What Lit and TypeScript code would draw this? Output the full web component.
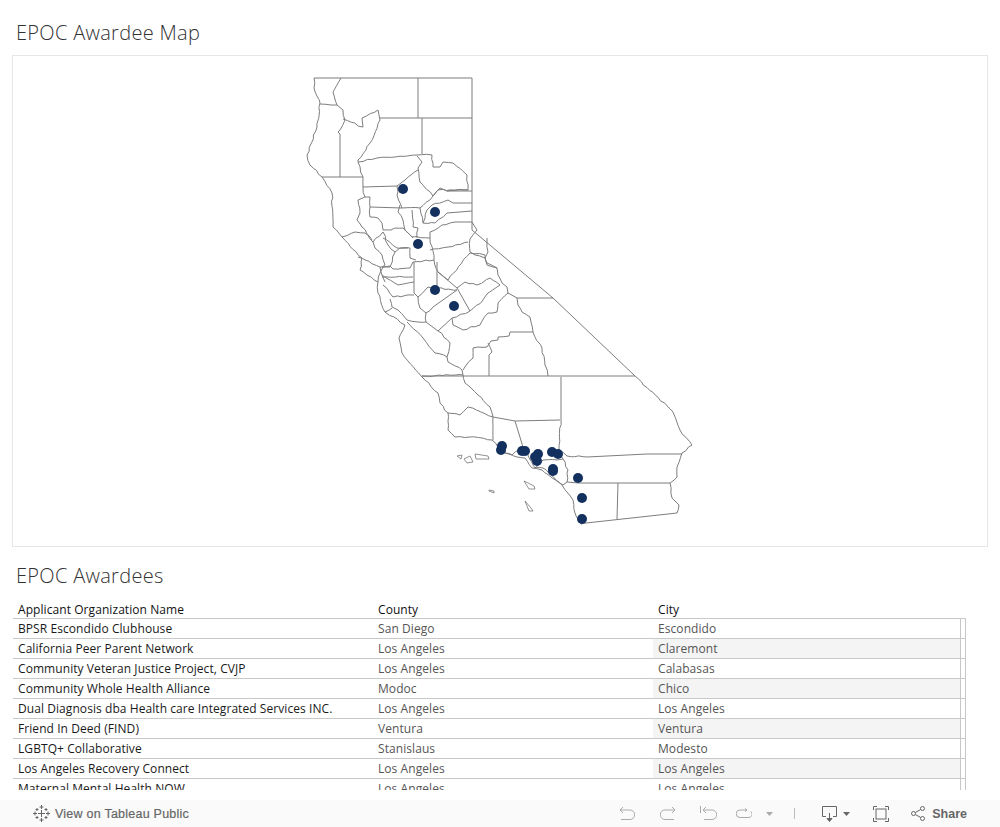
import { LitElement, html, css, svg } from "lit";
import { customElement } from "lit/decorators.js";

type P = [number, number];
const parse = (s: string): P[] => s.split(" ").map((p) => p.split(",").map(Number) as P);

// Deterministic small wobble so that natural county borders look hand-surveyed, not ruler-straight.
function wobble(s: string, seed: number): string {
  const pts = parse(s);
  let r = seed * 9301 + 49297;
  const rnd = () => {
    r = (r * 9301 + 49297) % 233280;
    return r / 233280 - 0.5;
  };
  const out: string[] = [];
  pts.forEach((p, i) => {
    out.push(`${p[0]},${p[1]}`);
    const q = pts[i + 1];
    if (!q) return;
    const len = Math.hypot(q[0] - p[0], q[1] - p[1]);
    const n = Math.floor(len / 4);
    for (let k = 1; k < n; k++) {
      const t = k / n;
      out.push(`${(p[0] + (q[0] - p[0]) * t + rnd() * 1.6).toFixed(1)},${(p[1] + (q[1] - p[1]) * t + rnd() * 1.6).toFixed(1)}`);
    }
  });
  return out.join(" ");
}

const straight = [
  "314,78 472,78 472,230 553,298 635,376",
  "418,78 418,118", "380,118 472,118", "422,118 422,154", "472,191 447,191", "472,203 453,203", "472,211 447,213", "472,222 455,222",
  "322,177 363,177", "340,134 340,177", "363,187 397,186",
  "397,186 405,180", "402,208 370,207",
  "422,376 635,376", "561,377 561,420", "493,417 515,421 560,420", "618,483 617,519",
  "517,298 553,298", "489,355 489,376", "414,262 414,293", "437,262 437,288",
  "533,332 510,332", "677,513 586,523", "567,482 578,483 670,483", "587,457 647,454 682,454",
  "438,272 448,280", "438,272 457,288 470,311", "457,290 433,307", "426,322 438,331 452,318", "515,421 523,447",
];

const natural = [
  "635,376 673,412 680,430 692,445 682,453 677,467 677,477 670,483 672,498 679,505 677,513",
  "586,523 581,524 575,513 573,500 562,485 542,470 532,468 525,458 517,457 505,453 492,440 470,437 455,437 448,430 448,413 440,403 438,393 422,377 402,353 399,338 405,325 385,312 378,293 378,282 360,270 362,258 342,237 333,227 332,193 322,177 310,165 307,155 317,127 320,103 314,88 314,78",
  "341,78 333,92 337,105 331,105 320,104",
  "337,105 343,110 345,120 340,130 338,132 340,134",
  "343,119 363,127 362,118 378,110 380,120 370,143 358,160 358,162 377,158 395,157 417,155 432,155 433,167 440,167 443,162 453,163 467,175 468,190 447,191 440,188 433,196 420,182 418,168 422,162 417,156",
  "358,162 363,177 363,187 365,197 358,200 360,213 357,220 362,227 372,240",
  "405,180 418,170", "397,186 398,192 397,195 402,208", "370,207 370,197 365,197",
  "370,207 370,217 378,218 382,223 383,230 403,228 412,237 430,238",
  "402,208 420,208 433,196", "400,205 398,212 403,220 405,230 413,238",
  "412,210 413,227 418,228 417,238", "420,208 423,223 435,223 447,213",
  "427,210 423,223", "427,210 432,205 448,200 453,203", "433,196 438,190 468,190",
  "430,238 430,232 442,225 455,222", "472,222 477,230",
  "477,230 470,239 470,252 475,255 485,258", "430,250 448,247 468,242",
  "487,238 487,243 488,252 485,258 487,265 497,268 498,275 502,283 507,287 508,293 517,298",
  "517,298 518,305 522,312 530,317 533,332 542,348 545,365 548,376",
  "510,332 509,336 498,337 498,340 491,341 487,347 473,348 473,358 463,370",
  "488,343 492,352 489,355",
  "508,293 498,303 497,312 488,313 480,325 463,330 453,325 452,318 470,311 483,300 488,293 500,285 490,278 477,285 465,282 457,288",
  "448,280 470,253 485,255 487,263 497,268",
  "430,238 434,260 438,272",
  "342,237 355,232 365,233 373,242 383,232 388,245 395,252 390,267 380,267 358,257",
  "373,242 375,248 382,255 385,265 382,267", "395,252 400,248 410,248 410,258 416,260",
  "383,238 397,248 408,248", "434,260 413,262 410,268 393,269 390,266 383,267 380,273 378,282",
  "414,293 418,297 420,308 426,313 426,322",
  "418,297 428,287 437,288", "437,288 457,290", "433,307 426,313",
  "382,275 398,285 414,282", "380,267 382,275 385,282", "382,277 413,277",
  "383,285 393,297 414,295", "390,299 392,307 398,310 407,320 418,322 426,322",
  "385,312 392,308", "407,322 423,338 435,353 447,357 450,343 438,331",
  "447,357 448,362 462,370 463,375 422,376", "463,375 465,383 470,387",
  "470,387 478,395 490,407 493,417 493,440",
  "561,420 559,450 567,456 587,457",
  "523,447 512,455 505,453",
  "448,413 460,415 468,407 493,417", "523,447 535,468 543,460 557,460 563,459 568,470 567,482 563,485 543,468 535,468",
  "559,450 563,459",
];

const islands = [
  "457,456 462,455 461,459 457,456", "464,459 470,456 473,462 467,463 464,459",
  "475,454 488,456 489,459 476,459 475,454", "489,490 494,491 494,493 489,491 489,490",
  "524,481 534,486 535,489 529,489 524,481", "525,501 531,508 533,511 529,511 525,501",
];

const dots: P[] = [
  [403, 189], [435, 212], [418, 244], [435, 290], [454, 306],
  [502, 446], [501, 450], [522, 451], [525, 451], [538, 454], [535, 457], [537, 461],
  [552, 452], [558, 454], [553, 469], [553, 471], [578, 478], [582, 498], [582, 519],
];

const rows = [
  ["BPSR Escondido Clubhouse", "San Diego", "Escondido"],
  ["California Peer Parent Network", "Los Angeles", "Claremont"],
  ["Community Veteran Justice Project, CVJP", "Los Angeles", "Calabasas"],
  ["Community Whole Health Alliance", "Modoc", "Chico"],
  ["Dual Diagnosis dba Health care Integrated Services INC.", "Los Angeles", "Los Angeles"],
  ["Friend In Deed (FIND)", "Ventura", "Ventura"],
  ["LGBTQ+ Collaborative", "Stanislaus", "Modesto"],
  ["Los Angeles Recovery Connect", "Los Angeles", "Los Angeles"],
  ["Maternal Mental Health NOW", "Los Angeles", "Los Angeles"],
];

@customElement("app-root")
export class AppRoot extends LitElement {
  static styles = css`
    :host { display: flex; flex-direction: column; height: 827px; overflow: hidden; background: #fff; font-family: "Open Sans", sans-serif; }
    .title { font-size: 20px; font-weight: 300; color: #333; line-height: 28px; padding: 19px 0 0 16px; height: 36px; letter-spacing: 0.3px; }
    .map { margin: 0 12px; border: 1px solid #e6e6e6; height: 490px; }
    .map svg { display: block; }
    .l { fill: none; stroke: #7d7d7d; stroke-width: 1; stroke-linejoin: round; }
    .i { fill: #fff; stroke: #777; stroke-width: .8; }
    .d { fill: #13305f; }
    .t2 { padding-top: 15px; height: 40px; }
    .table { margin-left: 13px; width: 953px; height: 188px; overflow: hidden; font-size: 12px; color: #555; letter-spacing: .07px; }
    .r { display: grid; grid-template-columns: 360px 280px 1fr; grid-template-rows: 19px; height: 19px; line-height: 20px; border-bottom: 1px solid #c8c8c8; }
    .r > div { padding-left: 5px; white-space: nowrap; }
    .head { height: 16px; grid-template-rows: 16px; line-height: 15px; color: #111; font-weight: 500; }
    .n { color: #1a1a1a; font-weight: 500; }
    .r > .c { display: flex; height: 19px; padding-left: 0; border-right: 1px solid #c8c8c8; }
    .c span { flex: 1; padding-left: 5px; margin-right: 4px; border-right: 1px solid #c8c8c8; }
    .band .c span { background: #f4f4f4; }
    .gap { height: 10px; }
    .bar { height: 27px; background: #fafafa; display: flex; align-items: center; padding: 0 33px; color: #666; font-family: "Liberation Sans", sans-serif; font-size: 12.5px; }
    .bar svg { display: block; flex: none; }
    .view { margin-left: 5px; letter-spacing: .24px; -webkit-text-stroke: .2px #666; }
    .sp { flex: 1; }
    .s { fill: none; stroke: #aaa; stroke-width: 1; }
    .s2 { fill: none; stroke: #666; stroke-width: 1; }
    .f { fill: #666; }
    .share { margin-left: 7px; font-weight: 700; }
    .m25 { margin-left: 25px; } .m24 { margin-left: 24px; } .m23 { margin-left: 23px; } .m22 { margin-left: 22px; }
    .m19 { margin-left: 19px; } .m14 { margin-left: 14px; } .m21 { margin-left: 21px; }
    .m27 { margin-left: 27px; } .m6 { margin-left: 6px; }
    .div { width: 1px; height: 11px; background: #bbb; }
  `;

  render() {
    return html`
      <div class="title">EPOC Awardee Map</div>
      <div class="map">
        <svg width="974" height="490" viewBox="13 56 974 490">
          ${islands.map((p) => svg`<polygon class="i" points=${p}></polygon>`)}
          ${straight.map((p) => svg`<polyline class="l" points=${p}></polyline>`)}
          ${natural.map((p, i) => svg`<polyline class="l" points=${wobble(p, i + 1)}></polyline>`)}
          ${dots.map(([x, y]) => svg`<circle class="d" cx=${x} cy=${y} r="5"></circle>`)}
        </svg>
      </div>
      <div class="title t2">EPOC Awardees</div>
      <div class="table">
        <div class="r head"><div>Applicant Organization Name</div><div>County</div><div>City</div></div>
        ${rows.map((r, i) => html`
          <div class="r ${i % 2 ? "band" : ""}">
            <div class="n">${r[0]}</div><div>${r[1]}</div>
            <div class="c"><span>${r[2]}</span></div>
          </div>`)}
      </div>
      <div class="gap"></div>
      <div class="bar">
        <svg width="17" height="17" viewBox="0 0 17 17" class="s2">
          <path d="M8.5 5v7M5 8.500h7M8.500 0v4M6.500 2h4M8.500 13v4M6.500 15h4M2 6.500v4M0 8.500h4M15 6.500v4M13 8.500h4M4 3v3M2.500 4.500h3M13 3v3M11.500 4.500h3M4 11v3M2.500 12.500h3M13 11v3M11.500 12.500h3"></path>
        </svg>
        <span class="view">View on Tableau Public</span>
        <span class="sp"></span>
        <svg width="16" height="15" viewBox="0 0 16 15" class="s"><path d="M1 4h10a4.500 4.500 0 0 1 0 9.500H2M4 1L1 4l3 3"></path></svg>
        <svg width="16" height="15" viewBox="0 0 16 15" class="s m25"><path d="M15 4H5a4.500 4.500 0 0 0 0 9.500h9M12 1l3 3-3 3"></path></svg>
        <svg width="17" height="15" viewBox="0 0 17 15" class="s m24"><path d="M.5 0v7M3 4h9a4.500 4.500 0 0 1 0 9.500H4M6 1L3 4l3 3"></path></svg>
        <svg width="16" height="11" viewBox="0 0 16 11" class="s m19"><path d="M11 2H4a3.500 3.500 0 0 0 0 7.500h8a3.500 3.500 0 0 0 3-6M9 .500L11 2 9 3.500"></path></svg>
        <svg width="7" height="4" viewBox="0 0 7 4" class="m14"><path d="M0 0h7L3.500 4z" fill="#aaa"></path></svg>
        <span class="div m21"></span>
        <svg width="15" height="16" viewBox="0 0 15 16" class="s2 m27"><path d="M4 10.500H.5V.5h14v10H11M7.500 7v8"></path><path d="M5 12.500h5L7.500 15.500z" class="f"></path></svg>
        <svg width="7" height="4" viewBox="0 0 7 4" class="m6"><path d="M0 0h7L3.500 4z" fill="#666"></path></svg>
        <svg width="16" height="16" viewBox="0 0 16 16" class="s2 m23"><path d="M4 .5H.5V4M12 .5h3.500V4M4 15.500H.5V12M12 15.500h3.500V12"></path><rect x="3" y="3" width="10" height="10"></rect></svg>
        <svg width="14" height="15" viewBox="0 0 14 15" class="s2 m22"><circle cx="2.500" cy="7.500" r="2"></circle><circle cx="11.500" cy="2.500" r="2"></circle><circle cx="11.500" cy="12.500" r="2"></circle><path d="M4.300 6.500l5.400-3M4.300 8.500l5.400 3"></path></svg>
        <span class="share">Share</span>
      </div>
    `;
  }
}
